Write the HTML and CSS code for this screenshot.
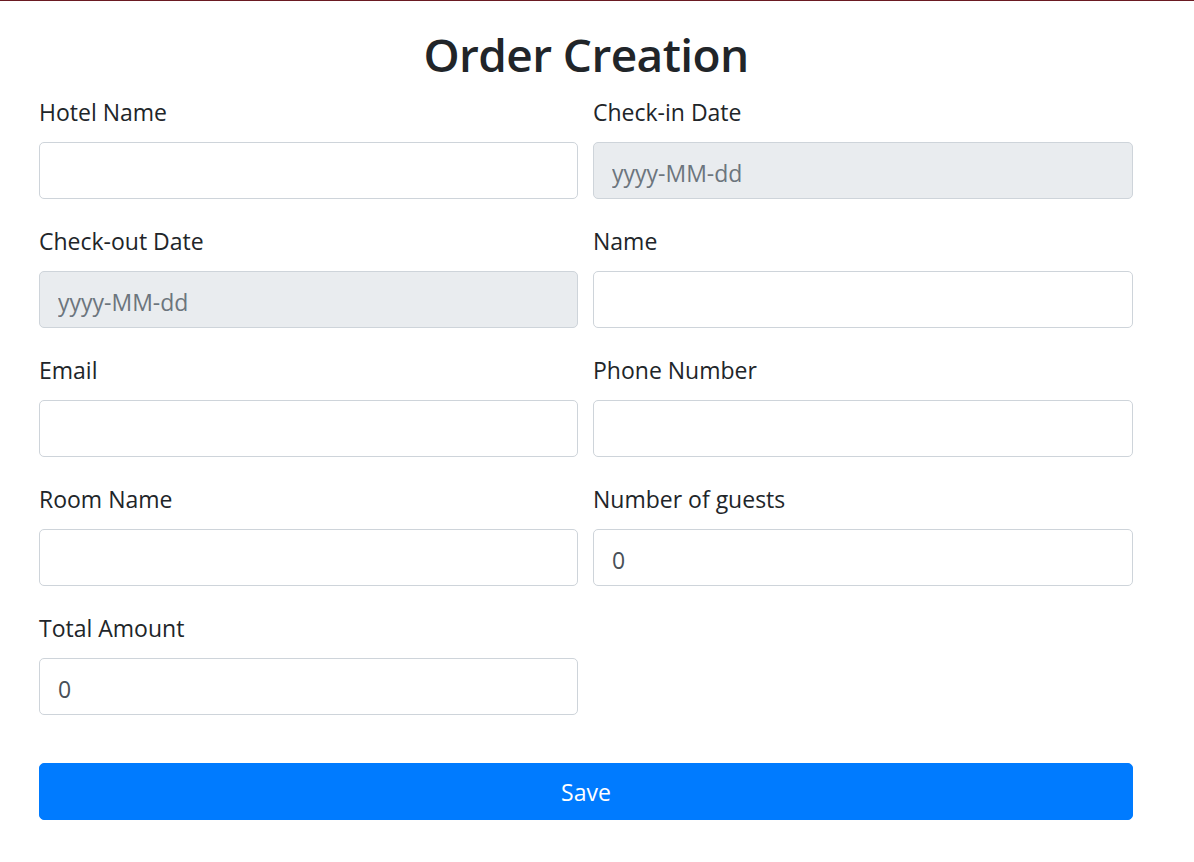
FILE: index.html
```html
<!DOCTYPE html>
<html lang="en">
<head>
<meta charset="utf-8">
<title>Order Creation</title>
<link rel="stylesheet" href="styles.css">
</head>
<body>
<div class="topline"></div>
<main class="container">
  <h1 class="title">Order Creation</h1>
  <form class="form">
    <div class="grid">
      <div class="group">
        <label class="label">Hotel Name</label>
        <input class="control" type="text">
      </div>
      <div class="group">
        <label class="label">Check-in Date</label>
        <input class="control" type="text" placeholder="yyyy-MM-dd" disabled>
      </div>
      <div class="group">
        <label class="label">Check-out Date</label>
        <input class="control" type="text" placeholder="yyyy-MM-dd" disabled>
      </div>
      <div class="group">
        <label class="label">Name</label>
        <input class="control" type="text">
      </div>
      <div class="group">
        <label class="label">Email</label>
        <input class="control" type="text">
      </div>
      <div class="group">
        <label class="label">Phone Number</label>
        <input class="control" type="text">
      </div>
      <div class="group">
        <label class="label">Room Name</label>
        <input class="control" type="text">
      </div>
      <div class="group">
        <label class="label">Number of guests</label>
        <input class="control" type="text" value="0">
      </div>
      <div class="group">
        <label class="label">Total Amount</label>
        <input class="control" type="text" value="0">
      </div>
    </div>
    <button class="btn" type="button">Save</button>
  </form>
</main>
</body>
</html>
```

FILE: styles.css
```css
* { box-sizing: border-box; }
html, body { margin: 0; padding: 0; background: #fff; }
body {
  font-family: "Open Sans", "Noto Sans", sans-serif;
  color: #212529;
  font-size: 23px;
  line-height: 1.5;
}
.topline { height: 1px; background: #6a1a22; }
.container { width: 1094px; margin-left: 39px; }
.title {
  margin: 24px 0 11px;
  font-size: 46px;
  font-weight: 600;
  letter-spacing: -0.6px;
  line-height: 58px;
  text-align: center;
}
.grid {
  display: grid;
  grid-template-columns: 539px 540px;
  column-gap: 15px;
}
.group {
  display: flex;
  flex-direction: column;
  margin-bottom: 24px;
}
.label {
  display: block;
  line-height: 36px;
  margin-bottom: 12px;
}
.control {
  display: block;
  width: 100%;
  height: 57px;
  padding: 4px 18px 0;
  font-family: inherit;
  font-size: 23px;
  color: #495057;
  background: #fff;
  border: 1px solid #ced4da;
  border-radius: 5px;
  outline: none;
}
.control::placeholder { color: #6c757d; opacity: 1; }
.control:disabled { background: #e9ecef; }
.btn {
  display: block;
  width: 100%;
  height: 57px;
  margin-top: 24px;
  font-family: inherit;
  font-size: 23px;
  color: #fff;
  background: #007bff;
  border: 1px solid #007bff;
  border-radius: 5px;
  cursor: pointer;
}
```
